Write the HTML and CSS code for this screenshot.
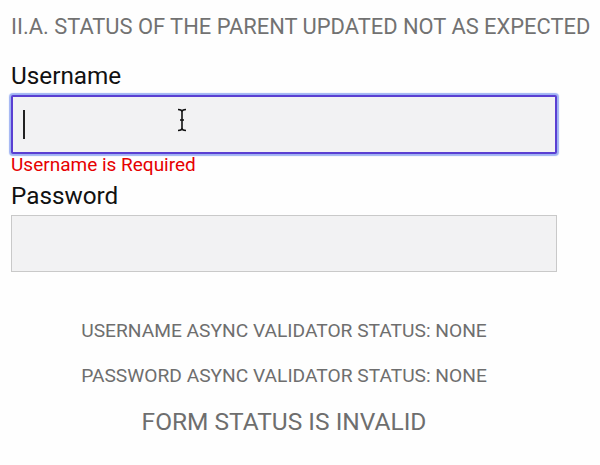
FILE: index.html
```html
<!DOCTYPE html>
<html>
<head>
<meta charset="utf-8">
<link rel="stylesheet" href="styles.css">
</head>
<body>
<div class="page">
  <h2 class="title">II.A. STATUS OF THE PARENT UPDATED NOT AS EXPECTED</h2>
  <form class="form">
    <label class="label">Username</label>
    <div class="field focused">
      <span class="caret"></span>
      <svg class="ibeam" width="10" height="24" viewBox="0 0 10 24">
        <path d="M1 1.5 Q5 1.5 5 4 Q5 1.5 9 1.5 M5 4 V20 M1 22.5 Q5 22.5 5 20 Q5 22.5 9 22.5 M3 12 H7" fill="none" stroke="#111" stroke-width="1.6"/>
      </svg>
    </div>
    <div class="error">Username is Required</div>
    <label class="label">Password</label>
    <div class="field"></div>
  </form>
  <div class="status">
    <p class="async">USERNAME ASYNC VALIDATOR STATUS: NONE</p>
    <p class="async">PASSWORD ASYNC VALIDATOR STATUS: NONE</p>
    <p class="form-status">FORM STATUS IS INVALID</p>
  </div>
</div>
</body>
</html>
```
FILE: styles.css
```css
html, body {
  margin: 0;
  background: #fefefe;
}
.page {
  width: 546px;
  padding: 13px 0 0 11px;
  font-family: Roboto, "Liberation Sans", sans-serif;
}
.title {
  margin: 0;
  font-size: 21.9px;
  font-weight: 400;
  color: #727272;
  white-space: nowrap;
  line-height: 28px;
}
.form {
  display: flex;
  flex-direction: column;
  margin-top: 21px;
}
.label {
  font-size: 24.3px;
  line-height: 28px;
  color: #111;
  margin-bottom: 5px;
}
.field {
  position: relative;
  box-sizing: border-box;
  height: 57px;
  border: 1px solid #c9c9c9;
  background: #f2f2f3;
}
.field.focused {
  height: 59px;
  border: 2px solid #5a3fd2;
  border-radius: 2px;
  box-shadow: 0 0 1px 2px #9fb3f3;
}
.caret {
  position: absolute;
  left: 10px;
  top: 13px;
  width: 2px;
  height: 29px;
  background: #222;
}
.ibeam {
  position: absolute;
  left: 164px;
  top: 11px;
}
.error {
  color: #e60000;
  font-size: 19px;
  line-height: 22px;
  height: 28px;
}
.status {
  text-align: center;
  margin-top: 47px;
  color: #6e6e6e;
}
.async {
  margin: 0 0 21px;
  font-size: 19.2px;
  line-height: 24px;
}
.form-status {
  margin: 0;
  font-size: 24.5px;
  line-height: 26px;
}
```
